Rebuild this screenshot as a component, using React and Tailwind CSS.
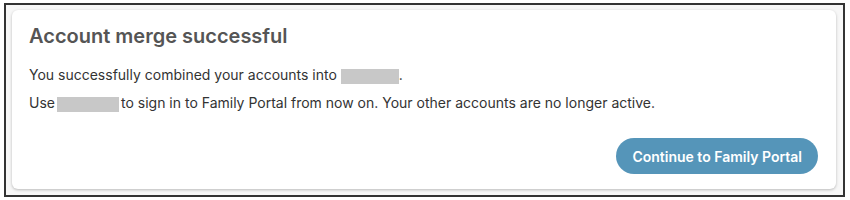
import React from 'react';

function Redacted({ w }) {
  return <span className={`inline-block h-[15px] bg-[#c8c8c8] align-middle ${w}`} />;
}

export default function App() {
  return (
    <div className="w-[850px] h-[200px] bg-white pl-[4px] pt-[3px] font-['Inter',sans-serif]">
      <div className="w-[841px] h-[194px] border-2 border-[#333] bg-[#f7f7f7] pl-[6px] pt-[5px] pr-[7px]">
        <div className="h-[179px] rounded-md bg-white shadow-[0_1px_3px_rgba(0,0,0,0.25)] px-[17px] pt-[16px] pb-[15px] flex flex-col">
          <h2 className="text-[20px] leading-[20px] font-semibold text-[#555]">Account merge successful</h2>
          <p className="mt-[19px] text-[14px] leading-[20px] text-[#333]">
            You successfully combined your accounts into <Redacted w="w-[58px]" />.
          </p>
          <p className="mt-[8px] text-[14px] leading-[20px] text-[#333]">
            Use<Redacted w="w-[62px] ml-[2px] mr-[2px]" />to sign in to Family Portal from now on. Your other accounts are no longer active.
          </p>
          <div className="mt-auto flex justify-end pr-[1px]">
            <button className="h-[36px] px-[16px] rounded-full bg-[#5595b9] text-white text-[14px] font-semibold">
              Continue to Family Portal
            </button>
          </div>
        </div>
      </div>
    </div>
  );
}
